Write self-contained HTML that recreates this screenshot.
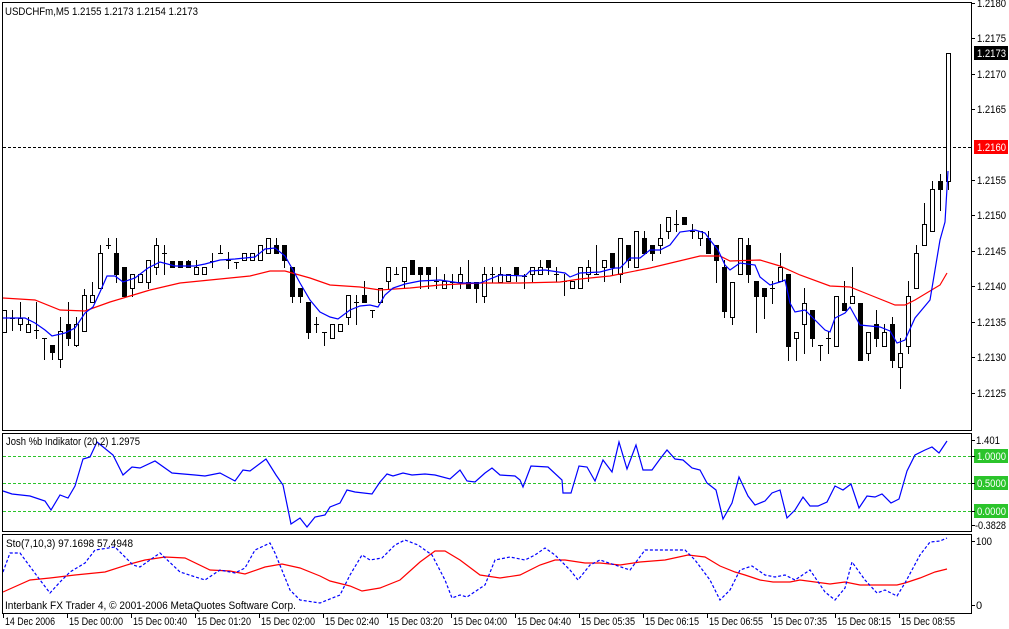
<!DOCTYPE html>
<html><head><meta charset="utf-8"><style>
html,body{margin:0;padding:0;background:#fff;width:1009px;height:629px;overflow:hidden}
svg{display:block}
text{font-family:"Liberation Sans","DejaVu Sans",sans-serif;font-size:11px;fill:#000}
</style></head><body>
<svg id="s" width="1009" height="629" xmlns="http://www.w3.org/2000/svg" shape-rendering="crispEdges">
<rect width="1009" height="629" fill="#fff"/>
<g id="g"></g>
<rect x="2.5" y="2.5" width="969" height="428" fill="none" stroke="#000"/>
<rect x="2.5" y="433.5" width="969" height="98" fill="none" stroke="#000"/>
<rect x="2.5" y="534.5" width="969" height="79" fill="none" stroke="#000"/>
<text x="5" y="15" textLength="193" lengthAdjust="spacingAndGlyphs">USDCHFm,M5  1.2155 1.2173 1.2154 1.2173</text>
<text x="6" y="445" textLength="134" lengthAdjust="spacingAndGlyphs">Josh %b Indikator (20,2) 1.2975</text>
<text x="6" y="547" textLength="127" lengthAdjust="spacingAndGlyphs">Sto(7,10,3) 97.1698 57.4948</text>
<text x="5" y="609" textLength="291" lengthAdjust="spacingAndGlyphs">Interbank FX Trader 4, © 2001-2006 MetaQuotes Software Corp.</text>
</svg>
<script>
var g=document.getElementById('g'),NS='http://www.w3.org/2000/svg';
function el(t,a,p){var e=document.createElementNS(NS,t);for(var k in a)e.setAttribute(k,a[k]);(p||g).appendChild(e);return e;}
function txt(x,y,s,a){var e=el('text',Object.assign({x:x,y:y},a||{}));e.textContent=s;return e;}
el('line',{x1:3,x2:971,y1:147.5,y2:147.5,stroke:'#000','stroke-dasharray':'3,2','stroke-width':1});
[456.5,483.5,511.5].forEach(function(y){el('line',{x1:3,x2:971,y1:y,y2:y,stroke:'#2bc42b','stroke-dasharray':'3,2'});});
var C=[[310,332,310,332,0],[318,318,310,330,0],[318,324,302,330,0],[324,332,317,332,0],[330,330,302,338,0],[338,338,338,359,0],[345,352,345,359,1],[331,359,317,367,0],[324,338,302,345,1],[324,345,317,346,0],
[295,331,289,331,0],[295,302,282,302,0],[253,288,245,288,0],[245,245,238,248,0],[253,274,238,282,1],[267,296,267,296,1],[274,288,274,296,0],[274,282,274,282,0],[260,282,260,288,0],[245,267,238,274,0],
[253,253,245,274,0],[261,267,261,267,1],[261,267,261,267,1],[261,267,260,267,1],[267,274,260,274,0],[267,274,267,274,0],[261,261,253,267,0],[253,253,245,253,0],[260,260,252,268,0],[262,262,262,268,0],
[253,260,253,260,0],[253,260,253,260,0],[245,260,245,260,0],[238,253,238,253,0],[245,253,238,253,1],[245,260,245,267,1],[267,296,267,302,1],[288,296,288,302,1],[302,332,302,338,1],[324,324,317,332,0],
[332,332,332,345,0],[324,338,324,338,0],[324,331,324,331,0],[295,317,295,324,0],[302,302,295,324,0],[295,302,281,302,1],[310,310,310,317,0],[288,302,288,302,0],[267,281,267,288,0],[274,274,267,274,0],
[267,281,267,288,0],[260,274,260,274,1],[267,274,267,288,1],[267,274,267,288,1],[281,281,267,288,0],[281,288,274,288,0],[282,282,274,288,0],[274,282,267,288,0],[282,288,260,288,1],[282,288,282,302,1],
[274,296,267,302,0],[274,274,267,282,0],[274,282,267,282,0],[274,281,274,281,0],[267,274,267,281,1],[276,276,274,288,0],[267,274,267,281,0],[267,274,260,274,0],[260,267,260,274,1],[274,274,267,281,0],
[281,281,274,295,0],[281,288,281,288,0],[267,288,267,288,0],[267,274,260,281,0],[274,274,245,274,0],[260,267,260,281,0],[253,267,253,274,1],[238,274,238,282,0],[245,260,245,267,1],[231,267,231,267,0],
[238,253,231,253,1],[245,253,245,260,1],[238,245,224,253,0],[217,231,217,238,0],[224,224,210,231,0],[217,224,217,224,1],[231,231,224,238,0],[231,238,231,245,0],[238,253,231,253,1],[245,260,245,282,1],
[267,311,260,317,1],[282,317,282,324,0],[238,274,238,274,0],[245,274,238,282,1],[281,296,281,332,1],[288,296,288,318,1],[288,288,281,303,0],[267,281,253,281,0],[274,346,274,360,1],[332,338,332,360,0],
[303,324,288,353,0],[310,338,310,346,1],[345,345,345,360,0],[338,338,331,353,0],[296,346,296,346,0],[303,310,281,310,1],[296,303,267,303,0],[303,360,303,360,1],[332,353,332,360,0],[324,338,310,346,1],
[332,346,324,346,0],[324,360,317,367,1],[353,367,338,388,0],[296,346,281,353,0],[253,288,245,288,0],[224,245,203,245,0],[189,231,181,231,0],[181,189,174,210,1],[53,181,53,189,0]];
C.forEach(function(c,i){var x=4+i*8;
 el('line',{x1:x+.5,x2:x+.5,y1:c[2],y2:c[3]+1,stroke:'#000'});
 if(c[1]-c[0]<2){el('line',{x1:x-2,x2:x+3,y1:c[0]+.5,y2:c[0]+.5,stroke:'#000'});}
 else el('rect',{x:x-2+.5,y:c[0]+.5,width:4,height:c[1]-c[0],fill:c[4]?'#000':'#fff',stroke:'#000'});
});
function pl(pts,col,dash){var d=[];for(var i=0;i<pts.length;i+=2)d.push(pts[i]+','+pts[i+1]);
 var a={points:d.join(' '),fill:'none',stroke:col,'stroke-width':1.2,'shape-rendering':'auto'};if(dash)a['stroke-dasharray']=dash;el('polyline',a);}
pl([3,298,35,300,60,310,85,311,110,302,130,296,150,290,180,283,230,278,250,276,270,271,285,271,310,278,330,285,360,287,380,290,410,288,440,285,480,283,520,283,560,282,580,279,610,276,650,268,700,256,720,256,730,261,760,260,780,266,800,275,830,286,850,287,870,295,895,305,905,305,915,300,940,285,947,273],'#f00');
pl([3,318,25,318,35,323,45,330,52,336,65,333,75,328,85,313,93,307,100,292,107,276,115,276,123,282,135,278,148,268,160,262,175,266,195,266,205,264,220,260,235,259,255,257,265,249,275,248,285,256,293,270,300,283,310,300,320,312,330,317,338,319,350,310,360,306,370,305,378,307,385,295,393,288,405,284,420,281,440,280,460,283,480,283,500,275,525,276,530,271,545,270,565,273,570,277,580,273,600,272,615,268,620,268,630,258,640,258,650,250,660,250,670,245,680,232,695,230,705,233,710,240,718,250,725,265,730,270,740,263,755,265,760,277,770,285,780,282,785,280,790,303,795,312,805,310,815,320,825,330,830,332,835,318,845,313,850,307,860,325,880,327,890,331,897,343,905,340,915,318,930,300,935,270,940,240,945,222,948,171],'#00f');
pl([3,491,12,494,30,496,45,501,51,510,60,495,68,498,75,486,83,459,90,457,97,442,113,455,123,475,132,467,140,468,155,461,172,473,195,475,205,476,220,473,235,481,243,470,250,471,266,459,276,475,283,485,291,524,300,518,307,527,315,517,325,515,330,507,340,503,347,490,355,492,372,494,380,482,387,474,393,476,403,473,412,475,425,474,435,475,450,479,460,470,467,481,475,482,485,473,492,468,500,475,515,476,520,480,523,487,531,466,548,467,562,480,563,493,571,493,579,466,587,467,595,481,603,460,612,472,619,442,627,469,636,445,643,470,652,470,660,459,667,450,675,459,683,460,692,468,700,470,707,483,716,490,723,519,732,503,739,477,748,496,755,505,765,501,772,493,780,490,787,518,795,510,803,497,810,506,818,506,827,502,835,486,843,490,851,484,859,508,867,496,875,497,882,494,891,503,899,499,907,471,915,455,925,450,932,447,939,453,947,441],'#00f');
pl([3,592,30,580,50,578,75,575,105,572,130,564,145,560,165,557,185,558,210,570,230,571,245,574,265,567,282,564,300,568,320,576,330,581,350,586,362,591,380,588,400,580,420,562,435,551,445,551,460,560,480,575,500,578,520,575,540,565,555,560,565,560,585,563,600,563,620,565,640,562,665,560,688,555,705,557,720,566,735,572,745,575,760,580,773,582,790,582,800,580,830,584,845,582,860,585,897,585,905,583,920,578,935,572,947,569],'#f00');
pl([3,572,10,553,20,553,40,580,50,593,60,582,70,572,85,563,95,550,115,547,133,565,140,567,160,553,180,572,205,580,220,570,235,573,245,568,255,550,270,543,275,553,290,590,300,600,320,603,340,595,350,575,362,555,370,560,382,558,395,545,405,540,418,545,432,555,445,580,452,598,460,595,467,597,485,585,495,560,510,557,525,560,535,555,545,548,555,555,570,570,578,580,590,565,600,560,615,565,630,570,645,550,655,550,675,550,685,550,695,560,710,580,720,600,730,590,740,570,752,566,765,575,775,577,785,575,795,580,810,570,825,592,835,600,845,588,852,562,865,580,877,593,885,590,897,596,905,583,920,555,930,542,940,541,947,538],'#00f','3,2');
var L={textLength:29,lengthAdjust:'spacingAndGlyphs'};
var pl2=[[1.2180,3],[1.2175,38],[1.2170,74],[1.2165,109],[1.2155,180],[1.2150,215],[1.2145,251],[1.2140,286],[1.2135,322],[1.2130,357],[1.2125,393]];
pl2.forEach(function(p){el('line',{x1:971,x2:975,y1:p[1]+.5,y2:p[1]+.5,stroke:'#000'});txt(977,p[1]+4,p[0].toFixed(4),L);});
function box(y,bg,fg,s){el('rect',{x:974,y:y-7,width:34,height:14,fill:bg});txt(977,y+4,s,Object.assign({style:'fill:'+fg},L));}
box(53,'#000','#fff','1.2173');box(147,'#f00','#fff','1.2160');
box(456,'#2bc42b','#fff','1.0000');box(483,'#2bc42b','#fff','0.5000');box(511,'#2bc42b','#fff','0.0000');
txt(976,444,'1.401',{textLength:24,lengthAdjust:'spacingAndGlyphs'});
txt(975,529,'-0.3828',{textLength:31,lengthAdjust:'spacingAndGlyphs'});
txt(976,545,'100',{textLength:16,lengthAdjust:'spacingAndGlyphs'});txt(976,609,'0');
[440,456,483,511,525,541,605].forEach(function(y){el('line',{x1:971,x2:975,y1:y+.5,y2:y+.5,stroke:'#000'});});
var T=['14 Dec 2006','15 Dec 00:00','15 Dec 00:40','15 Dec 01:20','15 Dec 02:00','15 Dec 02:40','15 Dec 03:20','15 Dec 04:00','15 Dec 04:40','15 Dec 05:35','15 Dec 06:15','15 Dec 06:55','15 Dec 07:35','15 Dec 08:15','15 Dec 08:55'];
T.forEach(function(s,i){var x=3+i*64;el('line',{x1:x+.5,x2:x+.5,y1:614,y2:618,stroke:'#000'});txt(x+2,625,s,{textLength:i?54:50,lengthAdjust:'spacingAndGlyphs'});});
</script>
</body></html>
